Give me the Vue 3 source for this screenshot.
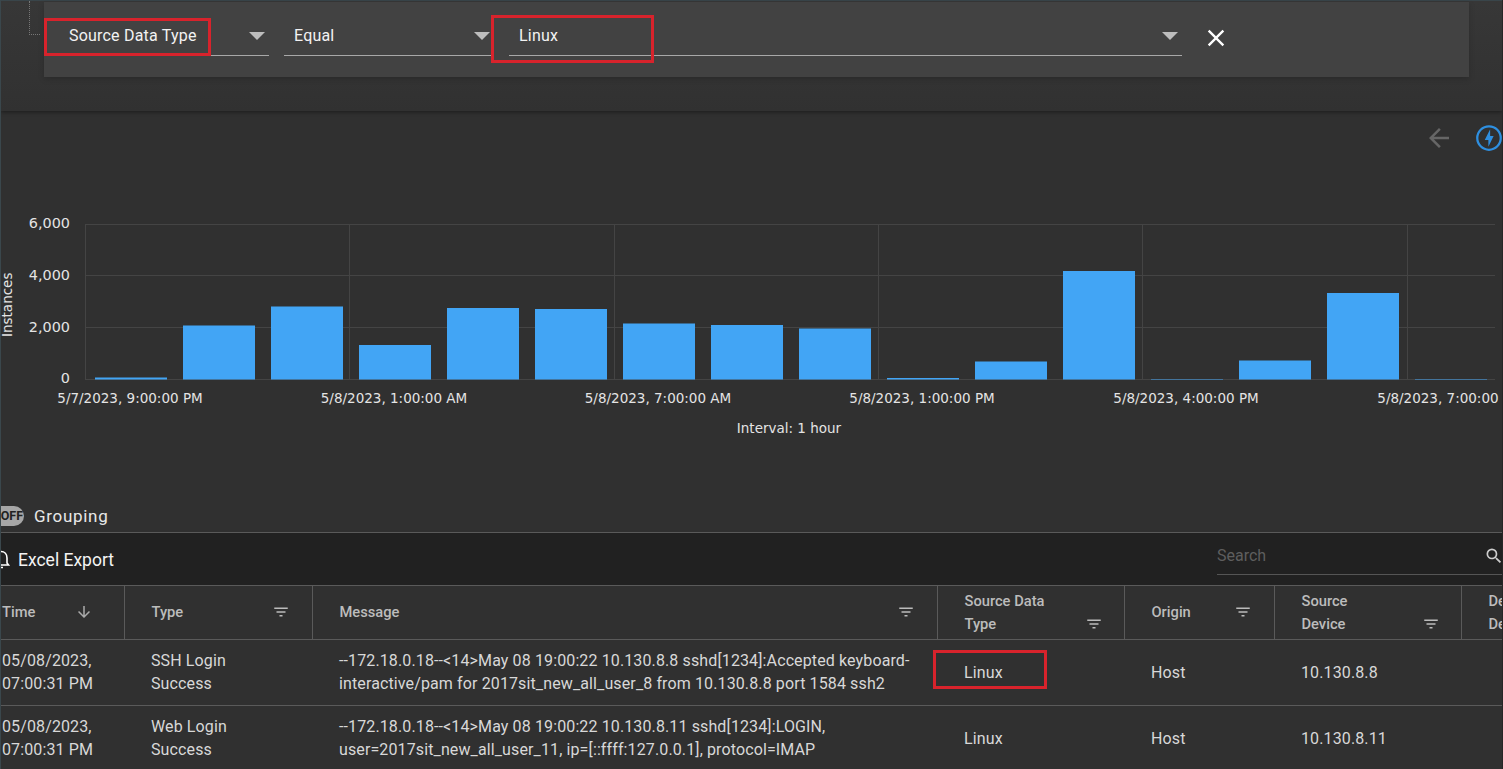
<template>
  <div class="page">
    <section class="filter-area">
      <div class="tree-line"></div>
      <div class="filter-card">
        <div class="select field-type">
          <span>Source Data Type</span>
          <i class="caret"></i>
        </div>
        <div class="select field-op">
          <span>Equal</span>
          <i class="caret"></i>
        </div>
        <div class="select field-value">
          <span>Linux</span>
          <i class="caret"></i>
        </div>
        <svg class="close" width="28" height="28" viewBox="0 0 24 24">
          <path d="M19 6.41L17.59 5 12 10.59 6.41 5 5 6.41 10.59 12 5 17.59 6.41 19 12 13.41 17.59 19 19 17.59 13.41 12z" fill="#fff" />
        </svg>
      </div>
    </section>

    <div class="chart-tools">
      <svg width="30" height="30" viewBox="0 0 24 24">
        <path d="M20 11H7.83l5.59-5.59L12 4l-8 8 8 8 1.41-1.41L7.83 13H20v-2z" fill="#666" />
      </svg>
      <svg class="bolt" width="30" height="30" viewBox="0 0 24 24">
        <circle cx="12" cy="12" r="9.4" fill="none" stroke="#2e8fe0" stroke-width="1.8" />
        <path d="M11.5 19v-5.4H8.6L12.9 5v5.4h2.8z" fill="#2e8fe0" />
      </svg>
    </div>

    <svg class="chart" width="1501" height="330" viewBox="0 0 1501 330">
      <g stroke="#444" stroke-width="1">
        <line v-for="y in gridY" :key="y" x1="84" x2="1494" :y1="y - 169.5" :y2="y - 169.5" />
        <line v-for="x in gridX" :key="x" :x1="x" :x2="x" y1="54" y2="210" />
      </g>
      <rect
        v-for="(top, i) in barTops"
        :key="i"
        :x="94 + i * 88"
        :y="top - 170"
        width="72"
        :height="379.5 - top"
        fill="#42a5f5"
      />
      <g class="axis axis-y" text-anchor="end">
        <text x="69" y="58">6,000</text>
        <text x="69" y="110">4,000</text>
        <text x="69" y="162">2,000</text>
        <text x="69" y="213">0</text>
      </g>
      <g class="axis" text-anchor="middle">
        <text v-for="t in xLabels" :key="t.x" :x="t.x" y="233">{{ t.label }}</text>
        <text x="788" y="263">Interval: 1 hour</text>
      </g>
      <text class="axis" transform="translate(11 167) rotate(-90)" x="0" y="0" text-anchor="start">Instances</text>
    </svg>

    <div class="grouping">
      <div class="toggle"><span>OFF</span></div>
      <span>Grouping</span>
    </div>

    <div class="toolbar">
      <div class="export">
        <svg width="20" height="20" viewBox="0 0 20 20">
          <path d="M3 1.5c3.500 0 6 2.600 6 6.500v5l1.500 2H-3M1 17.500h4" fill="none" stroke="#fff" stroke-width="1.6" />
        </svg>
        <span>Excel Export</span>
      </div>
      <div class="search">
        <span>Search</span>
        <svg width="20" height="20" viewBox="0 0 24 24">
          <path d="M15.5 14h-.79l-.28-.27A6.47 6.47 0 0 0 16 9.5 6.5 6.5 0 1 0 9.5 16c1.61 0 3.09-.59 4.23-1.57l.27.28v.79l5 4.99L20.49 19l-4.99-5zm-6 0C7.01 14 5 11.99 5 9.5S7.01 5 9.5 5 14 7.01 14 9.5 11.99 14 9.5 14z" fill="#ccc" />
        </svg>
      </div>
    </div>

    <div class="table-wrap">
      <table>
        <colgroup>
          <col v-for="c in columns" :key="c.label" :style="{ width: c.width + 'px' }" />
        </colgroup>
        <thead>
          <tr>
            <th v-for="c in columns" :key="c.label" :class="c.cls">
              <div class="th-inner">
                <span class="th-label">{{ c.label }}</span>
                <svg v-if="c.icon === 'sort'" class="icon" width="18" height="18" viewBox="0 0 24 24">
                  <path d="M20 12l-1.41-1.41L13 16.17V4h-2v12.17l-5.58-5.59L4 12l8 8 8-8z" fill="#aaa" />
                </svg>
                <svg v-else-if="c.icon === 'filter'" class="icon" width="18" height="18" viewBox="0 0 24 24">
                  <path d="M10 18h4v-2h-4v2zM3 6v2h18V6H3zm3 7h12v-2H6v2z" fill="#bbb" />
                </svg>
              </div>
            </th>
          </tr>
        </thead>
        <tbody>
          <tr v-for="(row, i) in rows" :key="i">
            <td class="first">05/08/2023,<br />07:00:31 PM</td>
            <td>{{ row.type }}<br />Success</td>
            <td class="msg">{{ row.line1 }}<br />{{ row.line2 }}</td>
            <td>Linux</td>
            <td>Host</td>
            <td>{{ row.device }}</td>
            <td></td>
          </tr>
        </tbody>
      </table>
    </div>

    <div class="mark mark-field"></div>
    <div class="mark mark-value"></div>
    <div class="mark mark-cell"></div>
  </div>
</template>

<script setup>
const gridY = [224, 275, 327, 379]
const gridX = [84.5, 348.5, 613.5, 877.5, 1141.5, 1406.5]
const barTops = [377.5, 325.5, 306.5, 345, 308, 309, 323.5, 325, 328.5, 378, 361.5, 271, 379, 360.5, 293, 379]

const xLabels = [
  { x: 129, label: '5/7/2023, 9:00:00 PM' },
  { x: 393, label: '5/8/2023, 1:00:00 AM' },
  { x: 657, label: '5/8/2023, 7:00:00 AM' },
  { x: 921, label: '5/8/2023, 1:00:00 PM' },
  { x: 1185, label: '5/8/2023, 4:00:00 PM' },
  { x: 1449, label: '5/8/2023, 7:00:00 PM' }
]

const columns = [
  { label: 'Time', width: 123, icon: 'sort', cls: 'col-time' },
  { label: 'Type', width: 188, icon: 'filter' },
  { label: 'Message', width: 625, icon: 'filter', cls: 'col-msg' },
  { label: 'Source Data Type', width: 187, icon: 'filter', cls: 'col-low' },
  { label: 'Origin', width: 150, icon: 'filter' },
  { label: 'Source Device', width: 187, icon: 'filter', cls: 'col-low' },
  { label: 'Destination Device', width: 180, icon: '', cls: 'col-low' }
]

const rows = [
  {
    type: 'SSH Login',
    line1: '--172.18.0.18--<14>May 08 19:00:22 10.130.8.8 sshd[1234]:Accepted keyboard-',
    line2: 'interactive/pam for 2017sit_new_all_user_8 from 10.130.8.8 port 1584 ssh2',
    device: '10.130.8.8'
  },
  {
    type: 'Web Login',
    line1: '--172.18.0.18--<14>May 08 19:00:22 10.130.8.11 sshd[1234]:LOGIN,',
    line2: 'user=2017sit_new_all_user_11, ip=[::ffff:127.0.0.1], protocol=IMAP',
    device: '10.130.8.11'
  }
]
</script>

<style>
html,
body {
  margin: 0;
  background: #303030;
  overflow: hidden;
}
</style>

<style scoped>
.page {
  position: relative;
  width: 1503px;
  height: 769px;
  box-sizing: border-box;
  border-left: 1px solid #3a474c;
  border-right: 1px solid #262626;
  background: #303030;
  color: #fff;
  font-family: Roboto, "Liberation Sans", sans-serif;
  overflow: hidden;
}

.filter-area {
  position: relative;
  height: 111px;
  box-sizing: border-box;
  padding: 1px 0 0 43px;
  border-top: 1px solid #39454a;
  background: linear-gradient(#373737, #333 70%, #313131);
  box-shadow: 0 1px 4px rgba(0, 0, 0, 0.45);
}

.tree-line {
  position: absolute;
  left: 28px;
  top: 0;
  width: 10px;
  height: 33px;
  border-left: 1px dotted #777;
  border-bottom: 1px dotted #777;
}

.filter-card {
  display: flex;
  align-items: flex-start;
  width: 1425px;
  height: 75px;
  box-sizing: border-box;
  padding: 16px 0 0 15px;
  background: #424242;
  box-shadow: 0 2px 6px rgba(0, 0, 0, 0.18);
}

.select {
  display: flex;
  align-items: center;
  justify-content: space-between;
  height: 38px;
  box-sizing: border-box;
  padding: 0 3px 2px 10px;
  border-bottom: 1px solid #a8a8a8;
  font-size: 16px;
  letter-spacing: 0.2px;
  color: #f2f2f2;
}

.field-type {
  width: 210px;
}

.field-op {
  width: 207px;
  margin-left: 15px;
  padding-right: 0;
}

.field-value {
  width: 673px;
  margin-left: 18px;
}

.caret {
  width: 0;
  height: 0;
  border-left: 8px solid transparent;
  border-right: 8px solid transparent;
  border-top: 8px solid #bdbdbd;
  margin-right: 1px;
}

.close {
  margin: 6px 0 0 20px;
}

.chart-tools {
  display: flex;
  justify-content: flex-end;
  gap: 20px;
  height: 59px;
  box-sizing: border-box;
  padding-top: 12px;
  margin-right: -2px;
}

.chart {
  display: block;
}

.axis {
  font-family: "DejaVu Sans", Verdana, sans-serif;
  font-size: 13.5px;
  fill: #e4e4e4;
}

.axis-y {
  font-size: 14.4px;
}

.grouping {
  display: flex;
  align-items: center;
  gap: 10px;
  height: 33px;
  box-sizing: border-box;
  border-bottom: 1px solid #5a5a5a;
  font-size: 17px;
  letter-spacing: 0.7px;
  color: #e8e8e8;
}

.toggle {
  display: flex;
  justify-content: flex-end;
  width: 24px;
  height: 20px;
  margin-left: -1px;
  padding-right: 1px;
  box-sizing: border-box;
  border-radius: 0 10px 10px 0;
  background: #a6a6a6;
  color: #222;
  font-size: 12.5px;
  font-weight: 700;
  line-height: 20px;
  letter-spacing: 0;
  white-space: nowrap;
  overflow: hidden;
}

.toolbar {
  display: flex;
  align-items: center;
  justify-content: space-between;
  height: 52px;
  background: #212121;
  border-bottom: 1px solid #5a5a5a;
}

.export {
  display: flex;
  align-items: center;
  margin-top: 2px;
  font-size: 17.5px;
  color: #f4f4f4;
}

.export svg {
  margin-left: -3px;
  width: 20px;
}

.search {
  align-self: flex-start;
  display: flex;
  align-items: center;
  justify-content: space-between;
  width: 285px;
  height: 38px;
  margin-top: 4px;
  box-sizing: border-box;
  border-bottom: 1px solid #555;
  font-size: 16px;
  color: #5e5e5e;
}

.search svg {
  margin-right: -2px;
}

.table-wrap {
  overflow: hidden;
}

table {
  width: 1640px;
  table-layout: fixed;
  border-collapse: collapse;
}

th {
  height: 53px;
  box-sizing: border-box;
  padding: 0 22px 0 27px;
  border-right: 1px solid #5a5a5a;
  border-bottom: 1px solid #5a5a5a;
  color: #bcbcbc;
  font-size: 14.7px;
  font-weight: 500;
  line-height: 23px;
  text-align: left;
}

th.col-time {
  padding: 0 31px 0 1px;
}

th.col-msg {
  padding-left: 27px;
}

th.col-low {
  padding: 2px 21px 0 27px;
}

.th-inner {
  display: flex;
  align-items: center;
  justify-content: space-between;
}

.col-low .th-inner {
  align-items: flex-end;
}

.th-label {
  display: block;
}

.col-low .th-label {
  max-width: 85px;
}

.col-low .icon {
  margin-bottom: 3px;
}

td {
  height: 66px;
  box-sizing: border-box;
  padding: 0 10px 0 27px;
  border-bottom: 1px solid #5a5a5a;
  color: #d8d8d8;
  font-size: 16px;
  letter-spacing: 0.12px;
  line-height: 23px;
  white-space: nowrap;
}

td.first {
  padding-left: 1px;
}

td.msg {
  padding-left: 27px;
}

.mark {
  position: absolute;
  box-sizing: border-box;
  border: 3px solid #d8232c;
  pointer-events: none;
}

.mark-field {
  left: 43px;
  top: 18px;
  width: 167px;
  height: 38px;
}

.mark-value {
  left: 490px;
  top: 15px;
  width: 163px;
  height: 48px;
}

.mark-cell {
  left: 932px;
  top: 650px;
  width: 114px;
  height: 39px;
}
</style>
